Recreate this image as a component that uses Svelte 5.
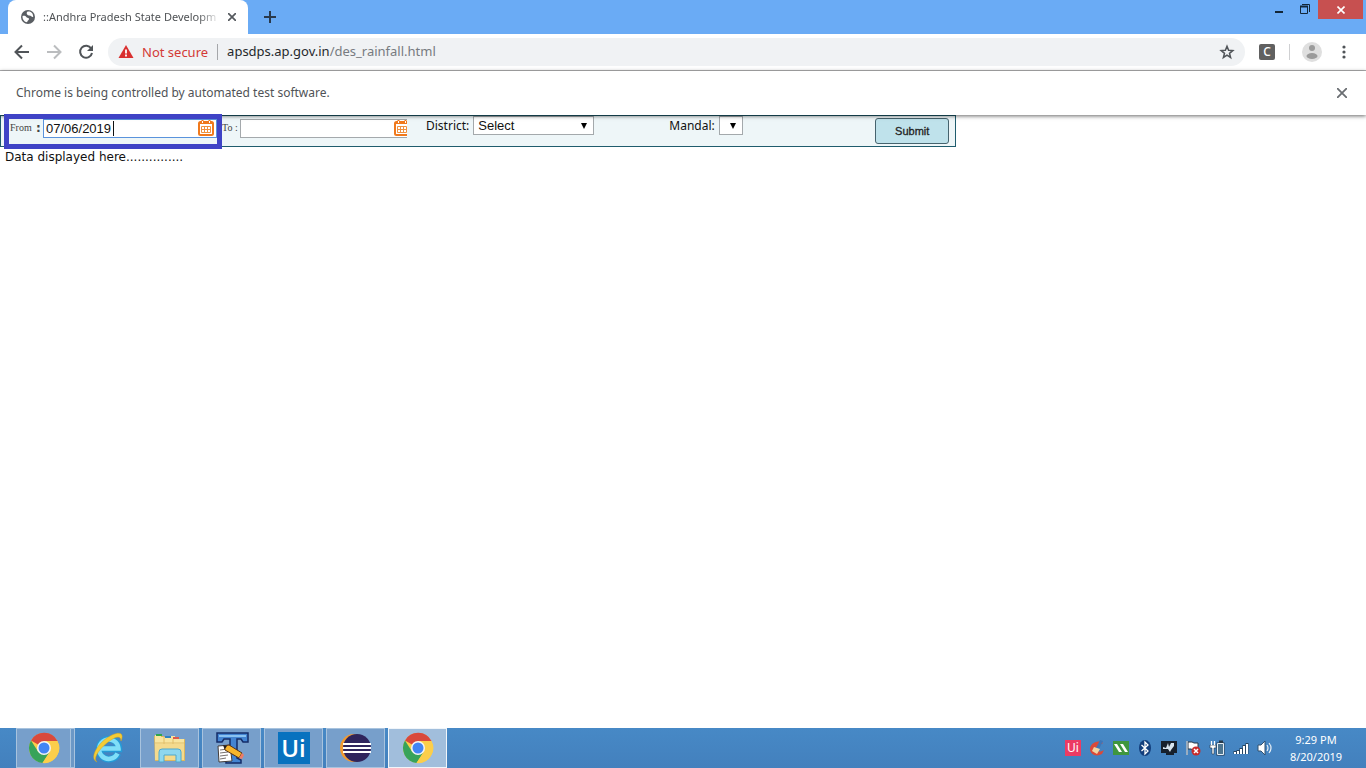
<script>
  let from = $state('07/06/2019');
  let to = $state('');
  let address = $state('apsdps.ap.gov.in/des_rainfall.html');
</script>

{#snippet chromeLogo()}
  <svg class="app" width="32" height="32" viewBox="0 0 32 32" aria-hidden="true">
    <circle cx="16" cy="16" r="15" fill="#fbce4b" />
    <path d="M16 16 3 8.500A15 15 0 0 1 29.500 9H16z" fill="#d9493c" />
    <path d="M3 8.500A15 15 0 0 0 14.500 31L22 19.500 16 16 10 19.500z" fill="#37a35a" />
    <path d="M16 9h13.500A15 15 0 0 1 14.500 31L22 19.500z" fill="#fbce4b" />
    <circle cx="16" cy="16" r="7" fill="#f5f5f5" />
    <circle cx="16" cy="16" r="5.500" fill="#4285f4" />
  </svg>
{/snippet}

{#snippet calendar()}
  <svg width="16" height="16" viewBox="0 0 16 16" aria-hidden="true">
    <rect x="1" y="2" width="14" height="13" rx="1.500" fill="#fff" stroke="#f0791c" stroke-width="2" />
    <path d="M1 3h14M4.500 0v4M11.500 0v4" stroke="#f0791c" stroke-width="2" />
    <path d="M4.500 1v2M11.500 1v2" stroke="#fff" />
    <path d="M3.500 6.500h9v6h-9zM3.500 9.500h9M6.500 6.500v6M9.500 6.500v6" fill="none" stroke="#f0913f" />
  </svg>
{/snippet}

{#snippet arrow()}
  <svg width="6" height="6" viewBox="0 0 6 6" aria-hidden="true"><path d="M0 0h6L3 6z" /></svg>
{/snippet}

<div class="window">
  <header class="tabs">
    <div class="tab">
      <svg width="14" height="14" viewBox="0 0 14 14" aria-hidden="true">
        <circle cx="7" cy="7" r="7" fill="#5a5e63" />
        <path d="M1.500 6c2-.5 3 0 4 1.200s2.500.3 2.500 1.800-1.500 1-1.500 2.500l-1 .8C3 11.500 1.200 9 1.500 6zM6 2c2-1 4 0 5 1 1 1.500 1.300 3 1.200 4-1.700.3-2-1.500-3.700-1.500S5 4 6 2z" fill="#fff" />
      </svg>
      <span class="title">::Andhra Pradesh State Developm</span>
      <button class="plain" aria-label="Close tab">
        <svg width="8" height="8" viewBox="0 0 8 8"><path d="m0 0 8 8M8 0 0 8" stroke="#55595e" stroke-width="1.700" /></svg>
      </button>
    </div>
    <button class="plain new" aria-label="New tab">
      <svg width="12" height="12" viewBox="0 0 12 12"><path d="M6 0v12M0 6h12" stroke="#29394c" stroke-width="2" /></svg>
    </button>
    <div class="controls">
      <button class="plain" aria-label="Minimize"><svg width="26" height="20" viewBox="0 0 26 20"><path d="M10 12h8" stroke="#122638" stroke-width="2" /></svg></button>
      <button class="plain" aria-label="Restore"><svg width="26" height="20" viewBox="0 0 26 20"><path d="M9.500 6.500h7v7h-7zM11 4.500h7.500V12" fill="none" stroke="#122638" /><path d="M9 6.500h8" stroke="#122638" stroke-width="2" /></svg></button>
      <button class="plain close" aria-label="Close"><svg width="8" height="8" viewBox="0 0 8 8"><path d="m.500.500 7 7M7.500.500l-7 7" stroke="#fff" stroke-width="1.600" /></svg></button>
    </div>
  </header>

  <nav class="toolbar">
    <button class="plain" aria-label="Back"><svg width="16" height="16" viewBox="0 0 16 16"><path d="M15 8H2M8 1.500 1.500 8 8 14.500" fill="none" stroke="#505458" stroke-width="2" /></svg></button>
    <button class="plain" aria-label="Forward"><svg width="16" height="16" viewBox="0 0 16 16"><path d="M1 8h13M8 1.500 14.500 8 8 14.500" fill="none" stroke="#bbbdbf" stroke-width="2" /></svg></button>
    <button class="plain" aria-label="Reload"><svg width="16" height="16" viewBox="0 0 16 16"><path d="M13.200 4.500A6 6 0 1 0 14 9" fill="none" stroke="#505458" stroke-width="2" /><path d="M15 1v6H9z" fill="#505458" /></svg></button>
    <div class="omni">
      <svg width="16" height="16" viewBox="0 0 16 16" aria-hidden="true"><path d="m8 1 7.500 13H.500z" fill="#d93030" /><path d="M8 5.500v4M8 10.500v2" stroke="#fff" stroke-width="1.800" /></svg>
      <span class="warn">Not secure</span>
      <label class="url">
        <span class="shown" aria-hidden="true">apsdps.ap.gov.in<span>/des_rainfall.html</span></span>
        <input aria-label="Address" bind:value={address} />
      </label>
      <button class="plain" aria-label="Bookmark"><svg width="16" height="16" viewBox="0 0 16 16"><path d="m8 2.300 1.600 4 4.200.3-3.300 2.700 1.100 4.200L8 11.200l-3.600 2.300 1.100-4.200-3.300-2.700 4.200-.3z" fill="none" stroke="#505458" stroke-width="1.500" /></svg></button>
    </div>
    <button class="plain ext">C</button>
    <span class="rule"></span>
    <button class="plain" aria-label="Profile"><svg width="20" height="20" viewBox="0 0 20 20"><circle cx="10" cy="10" r="10" fill="#dfdfdf" /><circle cx="10" cy="6" r="3" fill="#9b9b9b" /><ellipse cx="10" cy="14" rx="5.500" ry="3" fill="#9b9b9b" /></svg></button>
    <button class="plain menu" aria-label="Menu"><svg width="4" height="14" viewBox="0 0 4 14"><g fill="#505458"><circle cx="2" cy="2" r="1.600" /><circle cx="2" cy="7" r="1.600" /><circle cx="2" cy="12" r="1.600" /></g></svg></button>
  </nav>

  <div class="info">
    <span>Chrome is being controlled by automated test software.</span>
    <button class="plain" aria-label="Dismiss"><svg width="10" height="10" viewBox="0 0 10 10"><path d="m0 0 10 10M10 0 0 10" stroke="#6a6e72" stroke-width="1.800" /></svg></button>
  </div>

  <main>
    <form onsubmit={(e) => e.preventDefault()}>
      <div class="date first">
        <label for="from">From</label><b>:</b>
        <span class="field focus"><input id="from" bind:value={from} /><i></i>{@render calendar()}</span>
      </div>
      <div class="date second">
        <label for="to">To :</label>
        <span class="field clip"><input id="to" bind:value={to} />{@render calendar()}</span>
      </div>
      <div class="pick district">
        <label for="district">District:</label>
        <span class="drop"><select id="district"><option>Select</option></select>{@render arrow()}</span>
      </div>
      <div class="pick mandal">
        <label for="mandal">Mandal:</label>
        <span class="drop"><select id="mandal"></select>{@render arrow()}</span>
      </div>
      <button class="submit">Submit</button>
      <div class="highlight"></div>
    </form>
    <p>Data displayed here...............</p>
  </main>

  <footer>
    <button class="task stack" aria-label="Chrome">{@render chromeLogo()}</button>
    <button class="task bare" aria-label="Internet Explorer">
      <svg class="app" width="32" height="32" viewBox="0 0 32 32"><path d="M26 21.500A10 10 0 1 1 27 17H9" fill="none" stroke="#249bd7" stroke-width="6.500" /><path d="M25.500 21.500A9.700 9.700 0 1 1 26.500 16.500H9" fill="none" stroke="#80def8" stroke-width="4.500" /><path d="M5 30C-4 26 7 9 20 3c9-4 12-1 9 6 0-5-4-5-10-1C8 15 0 27 5 30z" fill="#f4cc36" stroke="#dba61b" stroke-width=".500" /></svg>
    </button>
    <button class="task" aria-label="File Explorer">
      <svg class="app" width="34" height="32" viewBox="0 0 34 32"><path d="M1 4h10l2 3h19v22H2z" fill="#dcb75d" /><path d="M2 3h6v2h7V4h7v3h9v21H2z" fill="#f8e5a0" /><path d="M3 2h6v2H3z" fill="#31a54b" /><path d="M12 4h6v2h-6z" fill="#3182c4" /><path d="M20 5h6v2h-6z" fill="#dc5b4c" /><path d="M2 11h29M11 5v7M20 7v6" stroke="#e0bd69" /><path d="M2 12h29v16H2z" fill="#f4da8d" /><path d="M6 30V20q0-3 3-3h16q3 0 3 3v10h-5v-7H11v7z" fill="#8ed7ef" stroke="#4fa8cd" /></svg>
    </button>
    <button class="task" aria-label="Text editor">
      <svg class="app" width="34" height="32" viewBox="0 0 34 32"><path d="M2 1h31v9h-5l-2-3h-4v19l4 2v3H11v-3l4-2V7H9l-2 3H2z" fill="#4384d2" stroke="#142c68" stroke-width="1.500" /><path d="M4 3h27v2H4z" fill="#8ac2f1" /><path d="m3 14 12-1 2 16-13 1z" fill="#fff" stroke="#443d3a" /><path d="m5 18 8-1M5 21l8-1M5 24l8-1M5 27l6-1" stroke="#77716f" /><path d="m9 14 5-1 13 8-3 5-14-8z" fill="#f8b52b" stroke="#563218" /><path d="m24 26 3-5 2 2-2 4z" fill="#ed7c67" /><path d="m8 13 4 1-2 3z" fill="#222" /></svg>
    </button>
    <button class="task" aria-label="UiPath"><span class="ui">Ui</span></button>
    <button class="task" aria-label="Eclipse">
      <svg class="app" width="34" height="32" viewBox="0 0 34 32"><circle cx="15" cy="16" r="14" fill="#f19a31" /><circle cx="18" cy="16" r="14" fill="#2f245c" /><path d="M4 12h28M4 16h28M4 20h28" stroke="#fff" stroke-width="2" /></svg>
    </button>
    <button class="task active" aria-label="Chrome window">{@render chromeLogo()}</button>

    <div class="tray">
      <span class="uismall">Ui</span>
      <svg width="16" height="16" viewBox="0 0 16 16"><path d="M14 3C8-1 1 4 1 9c0 6 7 8 12 5l2-4c-5 3-8 1-8-1 0-3 4-4 7-6z" fill="#db4938" /><path d="m11 0 3 1-4 8-3-1z" fill="#3d76b8" /><path d="m5 7 6 2-3 5-5-3z" fill="#f1d5a4" /></svg>
      <svg width="16" height="16" viewBox="0 0 16 16"><path d="M0 1h16v14H0z" fill="#3f963e" /><path d="M1 4h3l5 8H6zM7 4h3l5 8h-3z" fill="#fff" /></svg>
      <svg width="16" height="16" viewBox="0 0 16 16"><ellipse cx="8" cy="8" rx="6" ry="8" fill="#123e7c" /><path d="m4.500 5 6.500 6-3 3V2l3 3-6.500 6" fill="none" stroke="#fff" stroke-width="1.300" /></svg>
      <svg width="16" height="16" viewBox="0 0 16 16"><path d="M1 2h14v10H1zM5 14h8" fill="#17212d" stroke="#17212d" stroke-width="2" /><path d="M2 9V7l3 1 2-5 1 4 2-4h3v3l-3 4-1 2-2-3z" fill="#d7e5ef" /></svg>
      <svg width="16" height="16" viewBox="0 0 16 16"><path d="M2 1v14M3 2h4l2 1h4v7H8L6 9H3z" fill="#fff" stroke="#263747" /><path d="M2 1v14" stroke="#fff" /><circle cx="11" cy="11" r="4.500" fill="#c82b2b" /><path d="m9 9 4 4M13 9l-4 4" stroke="#fff" stroke-width="1.500" /></svg>
      <svg width="16" height="16" viewBox="0 0 16 16"><path d="M8.500 3.500h6v11h-6zM10 1.500h3v2" fill="#668fae" stroke="#263747" stroke-width="2" /><path d="M8.500 3.500h6v11h-6z" fill="#4d7590" stroke="#e6eef5" /><path d="M1 5h6v3H5v6H3V8H1z" fill="#fff" stroke="#263747" stroke-width=".600" /><path d="M2.500 1v4M5.500 1v4" stroke="#fff" stroke-width="1.300" /></svg>
      <svg width="16" height="16" viewBox="0 0 16 16"><path d="M2 14v-3M5 14v-4M8 14V8M11 14V5M14 14V3" stroke="#26445f" stroke-width="3" /><path d="M2 14v-2M5 14v-3M8 14V9M11 14V6M14 14V4" stroke="#fff" stroke-width="2" /></svg>
      <svg width="16" height="16" viewBox="0 0 16 16"><path d="M1 5h3l4-4v14l-4-4H1z" fill="#fff" stroke="#31516f" /><path d="M10 5q2 3 0 6M12 3q4 5 0 10" fill="none" stroke="#e6eef5" stroke-width="1.200" /></svg>
      <time datetime="2019-08-20T21:29"><span>9:29 PM</span><span>8/20/2019</span></time>
    </div>
  </footer>
</div>

<style>
  :global(body) { margin: 0; }
  .window, .window * { box-sizing: border-box; }
  .window { min-height: 100vh; display: flex; flex-direction: column; background: #fff; font: 12px/16px "Noto Sans", sans-serif; color: #505356; }
  svg { display: block; flex: none; }
  button, input, select { font: inherit; margin: 0; }
  .plain { border: 0; padding: 0; background: none; display: flex; align-items: center; justify-content: center; flex: none; }
  .tabs { height: 34px; background: #6aabf5; display: flex; padding-left: 8px; }
  .tab { width: 240px; background: #fff; border-radius: 8px 8px 0 0; display: flex; align-items: center; padding: 0 12px 0 13px; gap: 8px; font-size: 11px; }
  .title { flex: 1; white-space: nowrap; mask-image: linear-gradient(90deg, #000 88%, transparent); }
  .new { margin-left: 16px; }
  .controls { margin-left: auto; display: flex; align-items: flex-start; padding-right: 3px; }
  .close { width: 45px; height: 19px; background: #c75050; margin-left: 1px; }
  .toolbar { height: 37px; border-bottom: 1px solid #b3b3b5; display: flex; align-items: center; padding: 0 18px 0 14px; gap: 16px; }
  .omni { flex: 1; height: 28px; margin-left: -2px; background: #f0f2f4; border-radius: 14px; display: flex; align-items: center; gap: 8px; padding: 0 10px; font-size: 13px; }
  .warn { color: #d33a36; border-right: 1px solid #a5a7aa; padding-right: 9px; }
  .url { flex: 1; display: grid; padding-left: 1px; }
  .url > * { grid-area: 1 / 1; }
  .shown { color: #25282b; }
  .shown span { color: #777b80; }
  .url input { width: 100%; height: 18px; padding: 0; border: 0; outline: 0; background: none; color: transparent; }
  .ext { width: 16px; height: 16px; margin-left: -2px; border-radius: 2px; background: #606060; color: #fff; font-size: 12px; font-weight: 500; }
  .rule { width: 1px; height: 16px; background: #cfd0d2; margin: 0 -4px 0 -2px; }
  .menu { width: 8px; margin-left: 2px; }
  .info { position: relative; z-index: 1; height: 44px; display: flex; align-items: center; justify-content: space-between; padding: 0 19px 0 16px; background: #fff; box-shadow: 0 1px 4px #0009; }
  main { flex: 1; color: #111; }
  form { position: relative; width: 70%; min-width: 940px; height: 32px; display: flex; align-items: flex-start; background: #eef6f8; border: 1px solid #1f5c6d; padding: 0 6px 0 9px; }
  form label { flex: none; }
  .date { display: flex; align-items: center; font-family: "Liberation Serif", serif; font-size: 10px; color: #444; height: 24px; }
  .first label { width: 26px; }
  .first b { width: 7px; font: bold 12px "DejaVu Sans", sans-serif; }
  .second { margin-left: 5px; }
  .second label { width: 18px; }
  .field { display: flex; align-items: center; width: 174px; height: 19px; background: #fff; border: 1px solid #a4a9ac; padding: 0 2px; overflow: hidden; }
  .field input { flex: 1; min-width: 0; padding: 0; border: 0; outline: 0; background: none; font: 13px/17px "Liberation Sans", sans-serif; color: #111; }
  .focus { border-color: #5a93dc; }
  .focus input { flex: none; width: 67px; }
  .focus i { width: 1px; height: 15px; background: #111; margin-right: auto; }
  .clip { width: 167px; border-right: 0; padding: 0; }
  .clip svg { margin-right: -3px; }
  .pick { display: flex; gap: 4px; line-height: 19px; font-size: 12px; }
  .district { margin-left: 19px; }
  .mandal { margin-left: 75px; }
  .drop { display: grid; width: 121px; height: 19px; }
  .mandal .drop { width: 24px; }
  .drop > * { grid-area: 1 / 1; }
  .drop svg { justify-self: end; align-self: center; margin-right: 7px; pointer-events: none; }
  select { appearance: none; width: 100%; height: 19px; border: 1px solid #a4a9ac; background: #fff; padding: 0 4px; font: 13px/17px "Liberation Sans", sans-serif; color: #111; border-radius: 0; }
  .submit { margin: 2px 0 0 auto; width: 74px; height: 26px; border: 1px solid #46636e; border-radius: 3px; background: #bfe2eb; color: #222; font: 11px "Liberation Sans", sans-serif; -webkit-text-stroke: 0.3px #222; }
  .highlight { position: absolute; left: 3px; top: -2px; width: 218px; height: 35px; border: 5px solid #3f43c6; pointer-events: none; }
  form:has(.highlight) { isolation: auto; }
  .highlight { z-index: 2; }
  p { margin: 2px 5px; font: 12px/16px "DejaVu Sans", sans-serif; }
  footer { height: 40px; display: flex; align-items: center; padding-left: 16px; gap: 3px; background: linear-gradient(#4789c6, #4380bd); }
  .task { width: 59px; height: 40px; border: 1px solid #a8c3de; background: #779fcb; padding: 0; display: grid; place-items: center; }
  .stack { padding-right: 4px; box-shadow: inset -3px 0 #6c98c6, inset -4px 0 #a8c3de; }
  .bare { background: none; border-color: transparent; }
  .active { border-color: #f0f5fa; background: #a1bedc; }
  .ui { width: 32px; height: 32px; background: #0872bf; color: #fff; font: 600 24px/32px "Open Sans", sans-serif; text-align: center; }
  .tray { display: flex; align-items: center; gap: 8px; margin-left: auto; padding-right: 20px; color: #fff; }
  .uismall { width: 16px; height: 16px; background: #ec3b63; font-size: 12px; text-align: center; }
  time { display: flex; flex-direction: column; text-align: center; width: 60px; margin-left: 5px; font-size: 11px; line-height: 17px; }
</style>
